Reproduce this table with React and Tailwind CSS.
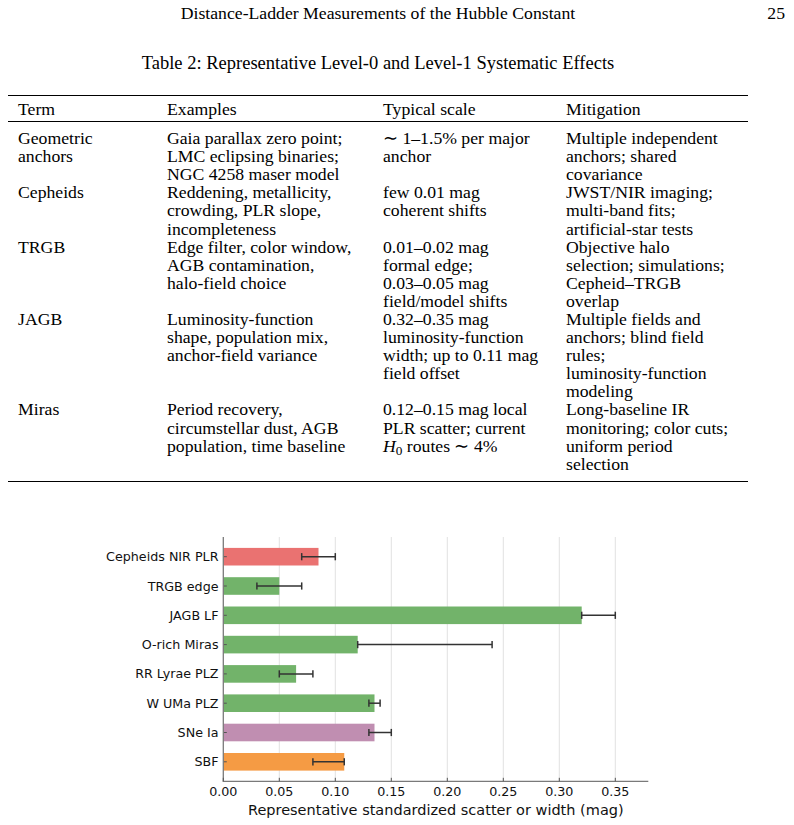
import React from "react";

const rows = [
  {
    term: ["Geometric", "anchors"],
    ex: ["Gaia parallax zero point;", "LMC eclipsing binaries;", "NGC 4258 maser model"],
    typ: ["∼ 1–1.5% per major", "anchor"],
    mit: ["Multiple independent", "anchors; shared", "covariance"],
  },
  {
    term: ["Cepheids"],
    ex: ["Reddening, metallicity,", "crowding, PLR slope,", "incompleteness"],
    typ: ["few 0.01 mag", "coherent shifts"],
    mit: ["JWST/NIR imaging;", "multi-band fits;", "artificial-star tests"],
  },
  {
    term: ["TRGB"],
    ex: ["Edge filter, color window,", "AGB contamination,", "halo-field choice"],
    typ: ["0.01–0.02 mag", "formal edge;", "0.03–0.05 mag", "field/model shifts"],
    mit: ["Objective halo", "selection; simulations;", "Cepheid–TRGB", "overlap"],
  },
  {
    term: ["JAGB"],
    ex: ["Luminosity-function", "shape, population mix,", "anchor-field variance"],
    typ: ["0.32–0.35 mag", "luminosity-function", "width; up to 0.11 mag", "field offset"],
    mit: ["Multiple fields and", "anchors; blind field", "rules;", "luminosity-function", "modeling"],
  },
  {
    term: ["Miras"],
    ex: ["Period recovery,", "circumstellar dust, AGB", "population, time baseline"],
    typ: [
      "0.12–0.15 mag local",
      "PLR scatter; current",
      <span key="h0">
        <i>H</i>
        <sub>0</sub> routes ∼ 4%
      </span>,
    ],
    mit: ["Long-baseline IR", "monitoring; color cuts;", "uniform period", "selection"],
  },
];

function Cell({ lines }) {
  return (
    <div className="flex flex-col">
      {lines.map((l, i) => (
        <div key={i} className="whitespace-nowrap">
          {l}
        </div>
      ))}
    </div>
  );
}

const bars = [
  { label: "Cepheids NIR PLR", v: 0.085, lo: 0.07, hi: 0.1, c: "#ea7271" },
  { label: "TRGB edge", v: 0.05, lo: 0.03, hi: 0.07, c: "#72b36a" },
  { label: "JAGB LF", v: 0.32, lo: 0.32, hi: 0.35, c: "#72b36a" },
  { label: "O-rich Miras", v: 0.12, lo: 0.12, hi: 0.24, c: "#72b36a" },
  { label: "RR Lyrae PLZ", v: 0.065, lo: 0.05, hi: 0.08, c: "#72b36a" },
  { label: "W UMa PLZ", v: 0.135, lo: 0.13, hi: 0.14, c: "#72b36a" },
  { label: "SNe Ia", v: 0.135, lo: 0.13, hi: 0.15, c: "#c08eb1" },
  { label: "SBF", v: 0.108, lo: 0.08, hi: 0.108, c: "#f59b44" },
];

function Chart() {
  const X0 = 223.3;
  const K = 1120;
  const x = (v) => X0 + v * K;
  const top = 38;
  const bottom = 282.3;
  const right = 648.3;
  const cy = (i) => 57.7 + 29.3 * i;
  const ticks = [0, 0.05, 0.1, 0.15, 0.2, 0.25, 0.3, 0.35];
  const font = "'DejaVu Sans', sans-serif";
  return (
    <svg width="794" height="325" viewBox="0 0 794 325" className="block">
      {ticks.slice(1).map((t) => (
        <line key={t} x1={x(t)} x2={x(t)} y1={top} y2={bottom} stroke="#e2e2e2" strokeWidth="1" />
      ))}
      {bars.map((b, i) => (
        <g key={b.label}>
          <rect x={X0} y={cy(i) - 8.8} width={b.v * K} height={17.6} fill={b.c} />
          <line x1={X0} x2={X0 + 3.5} y1={cy(i)} y2={cy(i)} stroke="#555" strokeWidth="1" />
          <line x1={x(b.lo)} x2={x(b.hi)} y1={cy(i)} y2={cy(i)} stroke="#333" strokeWidth="1.5" />
          <line x1={x(b.lo)} x2={x(b.lo)} y1={cy(i) - 3.6} y2={cy(i) + 3.6} stroke="#333" strokeWidth="1.5" />
          <line x1={x(b.hi)} x2={x(b.hi)} y1={cy(i) - 3.6} y2={cy(i) + 3.6} stroke="#333" strokeWidth="1.5" />
          <text
            x={218.5}
            y={cy(i)}
            textAnchor="end"
            dominantBaseline="central"
            fontFamily={font}
            fontSize="12.7"
            fill="#111"
          >
            {b.label}
          </text>
        </g>
      ))}
      <line x1={X0} x2={X0} y1={top} y2={bottom} stroke="#7a7a7a" strokeWidth="1.3" />
      <line x1={X0 - 0.65} x2={right} y1={bottom} y2={bottom} stroke="#7a7a7a" strokeWidth="1.3" />
      {ticks.map((t) => (
        <g key={t}>
          <line x1={x(t)} x2={x(t)} y1={bottom} y2={bottom - 3.5} stroke="#555" strokeWidth="1" />
          <text
            x={x(t)}
            y={292.7}
            textAnchor="middle"
            dominantBaseline="central"
            fontFamily={font}
            fontSize="12.7"
            fill="#111"
          >
            {t.toFixed(2)}
          </text>
        </g>
      ))}
      <text
        x={(X0 + right) / 2}
        y={311}
        textAnchor="middle"
        dominantBaseline="central"
        fontFamily={font}
        fontSize="14.5"
        fill="#111"
      >
        Representative standardized scatter or width (mag)
      </text>
    </svg>
  );
}

export default function App() {
  return (
    <div className="w-[794px] h-[825px] bg-white overflow-hidden text-black font-['Liberation_Serif',serif] text-[17.7px] leading-[18.1px]">
      <div className="flex pt-[4px]">
        <div className="ml-[8px] w-[740px] text-center">Distance-Ladder Measurements of the Hubble Constant</div>
        <div className="ml-auto pr-[9px]">25</div>
      </div>
      <div className="mt-[32px] w-[756px] text-center text-[18.5px]">
        Table 2: Representative Level-0 and Level-1 Systematic Effects
      </div>
      <div className="ml-[8px] mt-[23px] w-[740px]">
        <div className="h-[1.3px] bg-black" />
        <div className="grid h-[24.7px] grid-cols-[149px_216px_183px_1fr] items-center pl-[10px]">
          <div>Term</div>
          <div>Examples</div>
          <div>Typical scale</div>
          <div>Mitigation</div>
        </div>
        <div className="h-[0.9px] bg-black" />
        <div className="flex flex-col pl-[10px] pt-[7px] pb-[8.2px]">
          {rows.map((r, i) => (
            <div key={i} className="grid grid-cols-[149px_216px_183px_1fr]">
              <Cell lines={r.term} />
              <Cell lines={r.ex} />
              <Cell lines={r.typ} />
              <Cell lines={r.mit} />
            </div>
          ))}
        </div>
        <div className="h-[1.3px] bg-black" />
      </div>
      <div className="mt-[17px]">
        <Chart />
      </div>
    </div>
  );
}
